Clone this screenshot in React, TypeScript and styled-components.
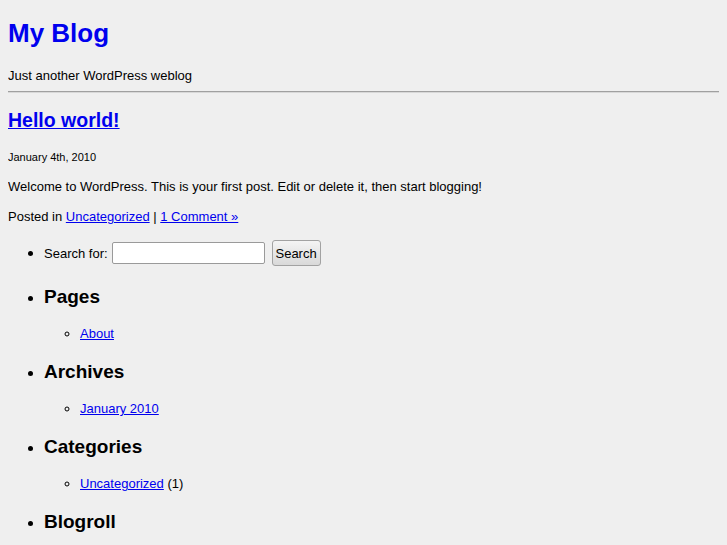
import React from 'react'
import styled, { createGlobalStyle } from 'styled-components'

const GlobalStyle = createGlobalStyle`
  html {
    background: #efefef;
  }
  body {
    margin: 8px;
    font-family: 'Liberation Sans', Arial, sans-serif;
    font-size: 13px;
    color: #000;
  }
`

const Header = styled.div``

const SiteTitle = styled.h1`
  font-size: 26px;
  margin: 10px 0 17px;
  a {
    color: #0000ee;
    text-decoration: none;
  }
`

const Description = styled.div`
  line-height: 20px;
`

const Rule = styled.hr`
  border: none;
  border-top: 1px solid #a0a0a0;
  border-bottom: 1px solid #d8d8d8;
  margin: 5px 0 6px;
`

const Content = styled.div``

const PostTitle = styled.h2`
  font-size: 19.5px;
  margin: 16px 0 17px;
  a {
    color: #0000ee;
  }
`

const PostDate = styled.small`
  font-size: 11px;
`

const Entry = styled.div`
  p {
    margin: 15px 0;
  }
`

const Link = styled.a`
  color: #0000ee;
`

const PostMeta = styled.p`
  margin: 15px 0;
`

const Sidebar = styled.ul`
  margin: 0;
  padding-left: 36px;
  list-style: disc;
`

const WidgetItem = styled.li`
  margin: 0;
  &::marker {
    font-size: 15px;
  }
`

const SearchForm = styled.form`
  display: flex;
  align-items: center;
  gap: 4px;
  padding: 1px 0 0;
`

const SearchInput = styled.input`
  width: 147px;
  height: 18px;
  border: 1px solid #9a9a9a;
  border-radius: 2px;
  background: #fff;
  margin: 0;
  padding: 1px 2px;
`

const SearchButton = styled.button`
  font-family: 'Liberation Sans', Arial, sans-serif;
  font-size: 13px;
  height: 26px;
  width: 49px;
  margin-left: 3px;
  padding: 0;
  border: 1px solid #a2a2a2;
  border-radius: 3px;
  background: linear-gradient(#f4f4f4, #d9d9d9);
  color: #000;
`

const WidgetTitle = styled.h2`
  font-size: 19px;
  margin: 20px 0 18px;
`

const SubList = styled.ul`
  list-style: circle;
  padding-left: 36px;
  margin: 0;
  li {
    line-height: 15px;
  }
`

const widgets = [
  { title: 'Pages', items: [{ label: 'About' }] },
  { title: 'Archives', items: [{ label: 'January 2010' }] },
  { title: 'Categories', items: [{ label: 'Uncategorized', count: '(1)' }] },
]

const App = () => {
  return (
    <>
      <GlobalStyle />
      <Header>
        <SiteTitle>
          <a href="#">My Blog</a>
        </SiteTitle>
        <Description>Just another WordPress weblog</Description>
      </Header>
      <Rule />
      <Content>
        <PostTitle>
          <a href="#">Hello world!</a>
        </PostTitle>
        <PostDate>January 4th, 2010</PostDate>
        <Entry>
          <p>Welcome to WordPress. This is your first post. Edit or delete it, then start blogging!</p>
        </Entry>
        <PostMeta>
          Posted in <Link href="#">Uncategorized</Link> | <Link href="#">1 Comment »</Link>
        </PostMeta>
      </Content>
      <Sidebar>
        <WidgetItem>
          <SearchForm onSubmit={(e) => e.preventDefault()}>
            <label htmlFor="s">Search for:</label>
            <SearchInput id="s" type="text" />
            <SearchButton type="submit">Search</SearchButton>
          </SearchForm>
        </WidgetItem>
        {widgets.map((w) => (
          <WidgetItem key={w.title}>
            <WidgetTitle>{w.title}</WidgetTitle>
            <SubList>
              {w.items.map((it) => (
                <li key={it.label}>
                  <Link href="#">{it.label}</Link>
                  {it.count && ` ${it.count}`}
                </li>
              ))}
            </SubList>
          </WidgetItem>
        ))}
        <WidgetItem>
          <WidgetTitle>Blogroll</WidgetTitle>
        </WidgetItem>
      </Sidebar>
    </>
  )
}

export default App
